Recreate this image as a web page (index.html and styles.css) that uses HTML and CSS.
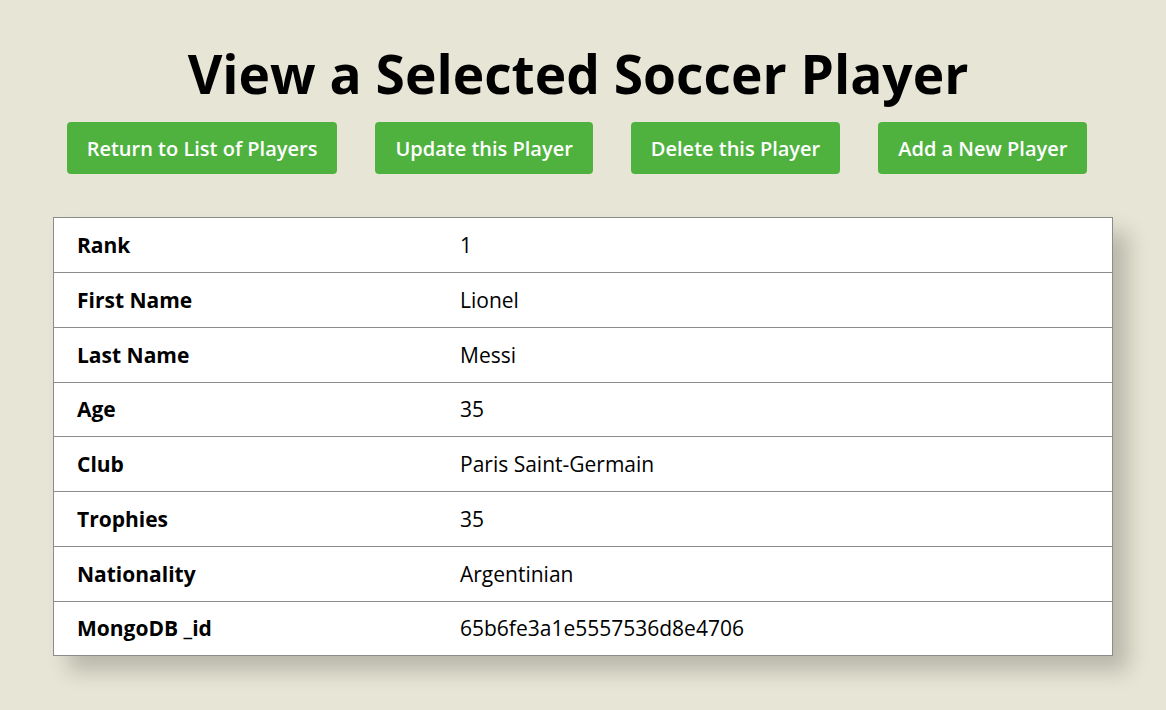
FILE: index.html
```html
<!DOCTYPE html>
<html>
<head>
<meta charset="utf-8">
<link rel="stylesheet" href="styles.css">
</head>
<body>
<div class="page">
  <h1 class="title">View a Selected Soccer Player</h1>
  <div class="actions">
    <a class="btn">Return to List of Players</a>
    <a class="btn">Update this Player</a>
    <a class="btn">Delete this Player</a>
    <a class="btn">Add a New Player</a>
  </div>
  <div class="card">
    <table class="details">
      <tr><td class="label">Rank</td><td class="value">1</td></tr>
      <tr><td class="label">First Name</td><td class="value">Lionel</td></tr>
      <tr><td class="label">Last Name</td><td class="value">Messi</td></tr>
      <tr><td class="label">Age</td><td class="value">35</td></tr>
      <tr><td class="label">Club</td><td class="value">Paris Saint-Germain</td></tr>
      <tr><td class="label">Trophies</td><td class="value">35</td></tr>
      <tr><td class="label">Nationality</td><td class="value">Argentinian</td></tr>
      <tr><td class="label">MongoDB _id</td><td class="value">65b6fe3a1e5557536d8e4706</td></tr>
    </table>
  </div>
</div>
</body>
</html>
```

FILE: styles.css
```css
html, body {
  margin: 0;
  padding: 0;
}
body {
  background: #e7e5d5;
  font-family: "Open Sans", "Noto Sans", sans-serif;
  color: #000;
}
.page {
  padding-top: 40px;
  padding-bottom: 54px;
}
.title {
  margin: 0;
  padding-right: 10px;
  text-align: center;
  font-size: 53.3px;
  line-height: 68px;
  font-weight: 700;
}
.actions {
  display: flex;
  justify-content: center;
  gap: 38px;
  margin-top: 14px;
  padding-right: 12px;
}
.btn {
  display: flex;
  align-items: center;
  height: 52px;
  padding: 0 20px;
  background: #4fb23f;
  color: #fff;
  border-radius: 4px;
  font-size: 20px;
  font-weight: 600;
}
.card {
  width: 1060px;
  margin: 43px auto 0;
  background: #fff;
  border: 1px solid #8c8c8c;
  box-sizing: border-box;
  box-shadow: 15px 15px 20px rgba(0, 0, 0, 0.2);
}
.details {
  width: 100%;
  border-collapse: collapse;
}
.details td {
  height: 53.75px;
  padding: 0 24px;
  border-top: 1px solid #8c8c8c;
  font-size: 21px;
}
.details tr:first-child td {
  border-top: none;
  height: 54px;
}
.details .label {
  width: 335px;
  padding-left: 23px;
  font-weight: 700;
}
```
